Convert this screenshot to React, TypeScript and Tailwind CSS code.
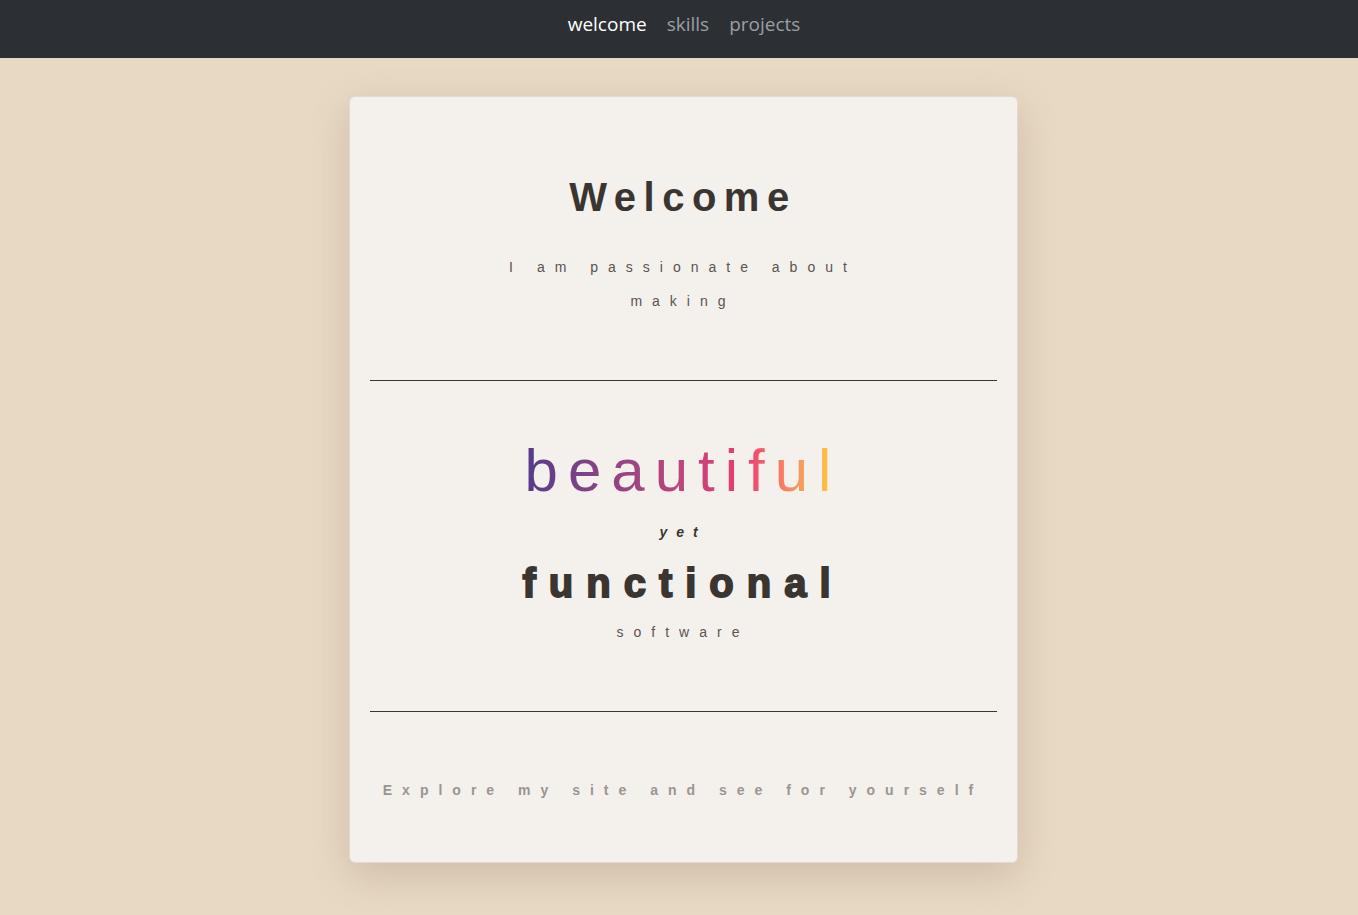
import React from "react";

const navLinks = ["welcome", "skills", "projects"];

const App = () => {
  return (
    <div className="min-h-screen bg-[#e8d9c5] font-['Liberation_Sans',Arial,sans-serif]">
      {/* Top nav */}
      <nav className="h-[58px] bg-[#2c2f33] flex items-center justify-center pl-[10px] font-['Open_Sans',sans-serif]">
        {navLinks.map((link, index) => (
          <a
            key={link}
            href="#"
            className={`px-[10px] text-[19px] leading-none pb-[10px] ${
              index === 0 ? "text-white" : "text-[#9a9fa6]"
            }`}
          >
            {link}
          </a>
        ))}
      </nav>

      {/* Card */}
      <div className="pt-[38px] pb-[52px] pl-[8px] flex justify-center">
        <div className="w-[669px] h-[767px] bg-[#f4f0ec] rounded-[6px] border border-[#e2dad1] shadow-[0_12px_40px_rgba(90,60,30,0.18)] px-[20px] text-center">
          {/* Welcome */}
          <div className="pt-[76px] pb-[62px] border-b border-[#3a3531]">
            <h1 className="text-[40px] leading-[48px] font-bold tracking-[7.5px] text-[#3a3531]">
              Welcome
            </h1>
            <p className="mt-[29px] mx-auto w-[366px] text-[14px] leading-[34px] tracking-[10px] text-[#5a5450]">
              I am passionate about making
            </p>
          </div>

          {/* Beautiful yet functional */}
          <div className="pt-[54px] pb-[62px] border-b border-[#3a3531]">
            <div className="text-[60px] leading-[72px]">
              <span className="inline-block bg-gradient-to-r from-[#553b8a] via-[#ec3b70] via-70% to-[#fdd22c] bg-clip-text text-transparent tracking-[10px]">
                beautiful
              </span>
            </div>
            <p className="mt-[8px] text-[14px] leading-[34px] font-bold italic tracking-[9px] text-[#3a3531]">
              yet
            </p>
            <h2 className="mt-[10px] text-[40px] leading-[48px] font-black tracking-[13px] text-[#3a3531] [-webkit-text-stroke:1.8px_#3a3531]">
              functional
            </h2>
            <p className="mt-[8px] text-[14px] leading-[34px] tracking-[10px] text-[#5a5450]">
              software
            </p>
          </div>

          {/* Explore */}
          <div className="pt-[61px]">
            <p className="text-[14px] leading-[34px] font-bold tracking-[10px] text-[#9b9591] whitespace-nowrap">
              Explore my site and see for yourself
            </p>
          </div>
        </div>
      </div>
    </div>
  );
};

export default App;
